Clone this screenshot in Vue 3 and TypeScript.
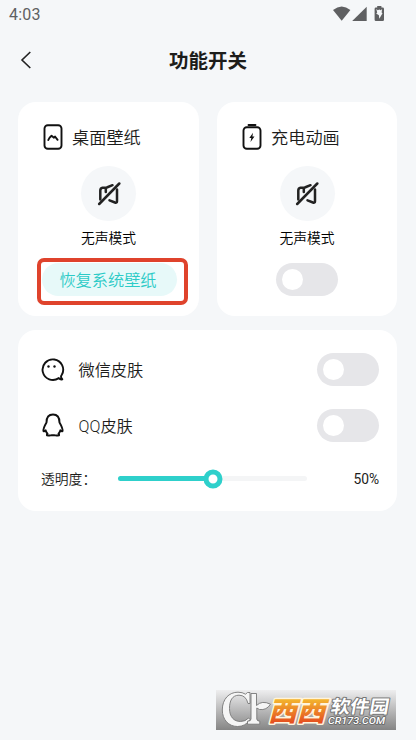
<script setup lang="ts">
import { computed, ref } from 'vue'

interface SkinRow {
  id: 'wechat' | 'qq'
  label: string
  enabled: boolean
}

const chargingEnabled = ref(false)
const opacity = ref(50)
const skins = ref<SkinRow[]>([
  { id: 'wechat', label: '微信皮肤', enabled: false },
  { id: 'qq', label: 'QQ皮肤', enabled: false },
])
const percent = computed(() => `${opacity.value}%`)
</script>

<template>
  <div class="screen">
    <div class="status-bar">
      <span class="clock">4:03</span>
      <svg class="status-icons" width="52" height="16" viewBox="0 0 52 16">
        <path d="M0 4Q8.700-3.200 17.400 4L8.700 14.800Z" />
        <path d="M33.700.8V15H19.200Z" />
        <path d="M44.200 0h4.200v1.600h1.300q1.300 0 1.300 1.300v10.800q0 1.300-1.300 1.300h-6.800q-1.300 0-1.300-1.300V2.900q0-1.300 1.300-1.300h1.300Z" />
        <path class="bolt" d="M43.300 3l1.500 1.200 1.500-.6 1.500.6 1.300-1.200-.5 3.500.9.800-3.200 5.500-.4-3.600-2.700-1.700 1-1Z" />
      </svg>
    </div>

    <header class="header">
      <svg class="back" width="12" height="18" viewBox="0 0 12 18">
        <path d="M10.300 1L2 9l8.300 8" />
      </svg>
      <h1>功能开关</h1>
    </header>

    <main class="content">
      <div class="cards">
        <section class="card feature">
          <div class="feature-title">
            <svg width="20" height="26" viewBox="0 0 20 26">
              <rect x="1.500" y="1.200" width="17" height="23.600" rx="3.300" />
              <path d="M5.300 16q1-2.600 3.200-4.300l2.500 2 1-1.200 2.600 3.300" />
            </svg>
            <span>桌面壁纸</span>
          </div>
          <div class="mute">
            <svg width="24" height="24" viewBox="0 0 24 24">
              <path d="M3.300 17.500V8.500Q3.300 6 5.500 5.700l4.300-.2L15.500 3.200M8.800 6v4M12.500 18.300l5.500 2.200q2 .7 2-1.300V7.500" />
              <path d="M2.200 22L22.300 1.500" />
            </svg>
          </div>
          <p>无声模式</p>
          <div class="highlight"><button class="restore">恢复系统壁纸</button></div>
        </section>

        <section class="card feature">
          <div class="feature-title">
            <svg width="20" height="26" viewBox="0 0 20 26">
              <path d="M6.500 1h7" />
              <rect x="1.500" y="3.200" width="17" height="21.600" rx="3.300" />
              <path class="solid" d="M11 8.800L7.300 14h2l-.8 4 4-5.500h-2.100Z" />
            </svg>
            <span>充电动画</span>
          </div>
          <div class="mute">
            <svg width="24" height="24" viewBox="0 0 24 24">
              <path d="M3.300 17.500V8.500Q3.300 6 5.500 5.700l4.300-.2L15.500 3.200M8.800 6v4M12.500 18.300l5.500 2.200q2 .7 2-1.300V7.500" />
              <path d="M2.200 22L22.300 1.500" />
            </svg>
          </div>
          <p>无声模式</p>
          <button class="toggle" :class="{ on: chargingEnabled }" @click="chargingEnabled = !chargingEnabled"><i /></button>
        </section>
      </div>

      <section class="card settings">
        <div v-for="skin in skins" :key="skin.id" class="row">
          <svg v-if="skin.id === 'wechat'" width="24" height="24" viewBox="0 0 24 24">
            <path d="M17.800 20.100A10.300 10.300 0 1 1 20.800 16.800q-1.400 1.900-.3 3.300l.8 1.200q-1.900.7-3.500-1.200Z" />
            <circle class="solid" cx="7.500" cy="8.500" r="1.200" />
            <circle class="solid" cx="13.500" cy="8.500" r="1.200" />
          </svg>
          <svg v-else width="24" height="24" viewBox="0 0 24 24">
            <path d="M5.500 9.500C5.500 4 8 1.500 12 1.500s6.500 2.500 6.500 8c2 3.400 3.400 6.400 3 8.600q-.9.500-2.100-.8-.5 2-1.900 3.300.9.600.6 1.600-2.800.6-5 0h-2.200q-2.200.6-5 0-.3-1 .6-1.600-1.400-1.300-1.900-3.300-1.200 1.300-2.100.8c-.4-2.200 1-5.200 3-8.600Z" />
          </svg>
          <span class="row-label">{{ skin.label }}</span>
          <button class="toggle" :class="{ on: skin.enabled }" @click="skin.enabled = !skin.enabled"><i /></button>
        </div>
        <div class="opacity-row">
          <span class="opacity-label">透明度：</span>
          <div class="track">
            <div class="fill" :style="{ width: percent }" />
            <div class="thumb" :style="{ left: percent }" />
          </div>
          <span class="value">{{ percent }}</span>
        </div>
      </section>
    </main>

    <svg class="watermark" width="180" height="40" viewBox="0 0 180 40">
      <defs>
        <linearGradient id="plate" x1="0" y1="0" x2="0" y2="1">
          <stop offset="0" stop-color="#eeeeef" />
          <stop offset="1" stop-color="#858585" />
        </linearGradient>
        <linearGradient id="orange" x1="0" y1="0" x2="0" y2="1">
          <stop offset="0.250" stop-color="#f3b52e" />
          <stop offset="0.850" stop-color="#e44d1f" />
        </linearGradient>
      </defs>
      <rect width="180" height="40" fill="url(#plate)" />
      <path class="emblem" d="M32 13.500Q30 5.200 23 5.200C16 5.200 13.500 11 13.500 18.500 13.500 27 18 31.500 24.500 31.500q5 0 8-3.500l1.500 1.500Q29.500 36.500 21.500 36.500C12.500 36.500 6.300 29.500 6.300 20 6.300 9 13 2.200 22 2.200q4.500 0 7.500 2L31.500 2.500H34v11Z" />
      <path class="emblem" d="M35 3.500h5.500V15.500Q46 10 54.500 14.200 50.500 20.500 43.500 19.500L40.800 18V29q0 2 3 2.200v3H31.500v-3q3.500 0 3.500-2.200Z" />
      <g transform="translate(52 31) skewX(-15)">
        <text class="brand" x="0" y="0" textLength="57" lengthAdjust="spacingAndGlyphs">西西</text>
      </g>
      <g transform="translate(114 23) skewX(-10)">
        <text class="site" x="0" y="0" textLength="58" lengthAdjust="spacingAndGlyphs">软件园</text>
      </g>
      <text class="domain" x="112" y="33.500" textLength="57" lengthAdjust="spacingAndGlyphs">CR173.COM</text>
    </svg>
  </div>
</template>

<style>
body {
  margin: 0;
  background: #f5f7f9;
}
</style>

<style scoped>
.screen {
  position: relative;
  box-sizing: border-box;
  width: 416px;
  height: 740px;
  overflow: hidden;
  background: #f5f7f9;
  color: #1d1d1b;
  font-family: Roboto, 'Noto Sans CJK SC', sans-serif;
  font-weight: 350;
}
.status-bar {
  display: flex;
  align-items: center;
  justify-content: space-between;
  height: 28px;
  padding: 0 31px 0 9px;
}
.clock {
  color: #5f6062;
  font-size: 16px;
  font-weight: 400;
  letter-spacing: 0.200px;
  line-height: 28px;
  padding-top: 1px;
}
.status-icons {
  fill: #5f6062;
  margin-top: -1px;
}
.status-icons .bolt {
  fill: #f5f7f9;
}
.header {
  display: grid;
  grid-template-columns: 20px 1fr 20px;
  align-items: center;
  height: 64px;
  padding: 0 20px;
}
.back {
  fill: none;
  stroke: #222;
  stroke-width: 1.600;
}
h1 {
  margin: 0;
  padding-top: 4px;
  text-align: center;
  font-size: 19.500px;
  line-height: 28px;
  font-weight: 700;
}
.content {
  padding: 10px 19px 0 18px;
}
.cards {
  display: grid;
  grid-template-columns: 181px 180px;
  justify-content: space-between;
}
.card {
  box-sizing: border-box;
  border-radius: 18px;
  background: #fff;
}
.feature {
  display: flex;
  flex-direction: column;
  align-items: center;
  height: 214px;
  padding-top: 20px;
}
.feature-title {
  display: flex;
  align-items: center;
  align-self: flex-start;
  gap: 9px;
  height: 30px;
  margin-left: 25px;
  font-size: 17.200px;
  line-height: 30px;
}
.feature-title span {
  padding-top: 1px;
}
svg {
  flex: none;
}
.feature-title svg,
.mute svg,
.row svg {
  fill: none;
  stroke: #111;
  stroke-width: 1.900;
  stroke-linecap: round;
  stroke-linejoin: round;
}
.feature-title .solid,
.row .solid {
  fill: #111;
  stroke: none;
}
.mute {
  display: grid;
  place-items: center;
  width: 55px;
  height: 55px;
  margin-top: 14px;
  border-radius: 50%;
  background: #f5f7f9;
}
.mute svg {
  stroke-width: 2.500;
  stroke: #222;
}
p {
  margin: 7px 0 0;
  color: #000;
  font-size: 13.800px;
  line-height: 20px;
}
.feature > .toggle {
  margin-top: 15px;
}
.highlight {
  box-sizing: border-box;
  width: 151px;
  height: 47px;
  margin: 10px 0 0 7px;
  padding: 1px 0 0 1px;
  border: 4px solid #df432c;
  border-radius: 7px;
}
.restore {
  width: 135px;
  height: 33px;
  padding: 2px 2px 0 0;
  border: 0;
  border-radius: 17px;
  background: #e7f9f9;
  color: #2ccbc7;
  font: inherit;
  font-size: 16.200px;
  line-height: 31px;
}
.toggle {
  flex: none;
  width: 62px;
  height: 33px;
  padding: 6px;
  border: 0;
  border-radius: 17px;
  background: #e6e6e9;
}
.toggle i {
  display: block;
  width: 21px;
  height: 21px;
  border-radius: 50%;
  background: #fff;
}
.toggle.on {
  background: #2ed0cb;
}
.toggle.on i {
  margin-left: auto;
}
.settings {
  height: 181px;
  margin-top: 14px;
  padding: 12px 18px 0 23px;
}
.row {
  display: flex;
  align-items: center;
  height: 55.500px;
}
.row-label {
  flex: 1;
  padding: 3px 0 0 13.500px;
  font-size: 16.200px;
  line-height: 24px;
}
.opacity-row {
  display: flex;
  align-items: center;
  height: 51px;
  font-size: 13.800px;
}
.opacity-label {
  width: 77px;
  margin-top: -2px;
  white-space: nowrap;
}
.track {
  position: relative;
  width: 189px;
  height: 5px;
  border-radius: 3px;
  background: #f4f5f6;
}
.fill {
  height: 100%;
  border-radius: 3px;
  background: #2ed0cb;
}
.thumb {
  position: absolute;
  top: 50%;
  box-sizing: border-box;
  width: 19px;
  height: 19px;
  border: 5px solid #2ed0cb;
  border-radius: 50%;
  background: #fff;
  transform: translate(-50%, -50%);
}
.value {
  flex: 1;
  padding-top: 1px;
  text-align: right;
  font-weight: 400;
}
.watermark {
  position: absolute;
  right: 20px;
  bottom: 10px;
}
.emblem {
  fill: #f5f5f5;
  stroke: #777;
  stroke-width: 0.900;
}
.brand,
.site,
.domain {
  paint-order: stroke;
  stroke-linejoin: round;
}
.brand {
  fill: url(#orange);
  stroke: #fff4dc;
  stroke-width: 3px;
  font: 900 27px 'Noto Sans CJK SC', sans-serif;
}
.site {
  fill: #fff;
  stroke: #777;
  stroke-width: 2px;
  font: 700 18px 'Noto Sans CJK SC', sans-serif;
}
.domain {
  fill: #fff;
  stroke: #666;
  stroke-width: 1.600px;
  font: italic 500 9.500px Roboto, sans-serif;
}
</style>
